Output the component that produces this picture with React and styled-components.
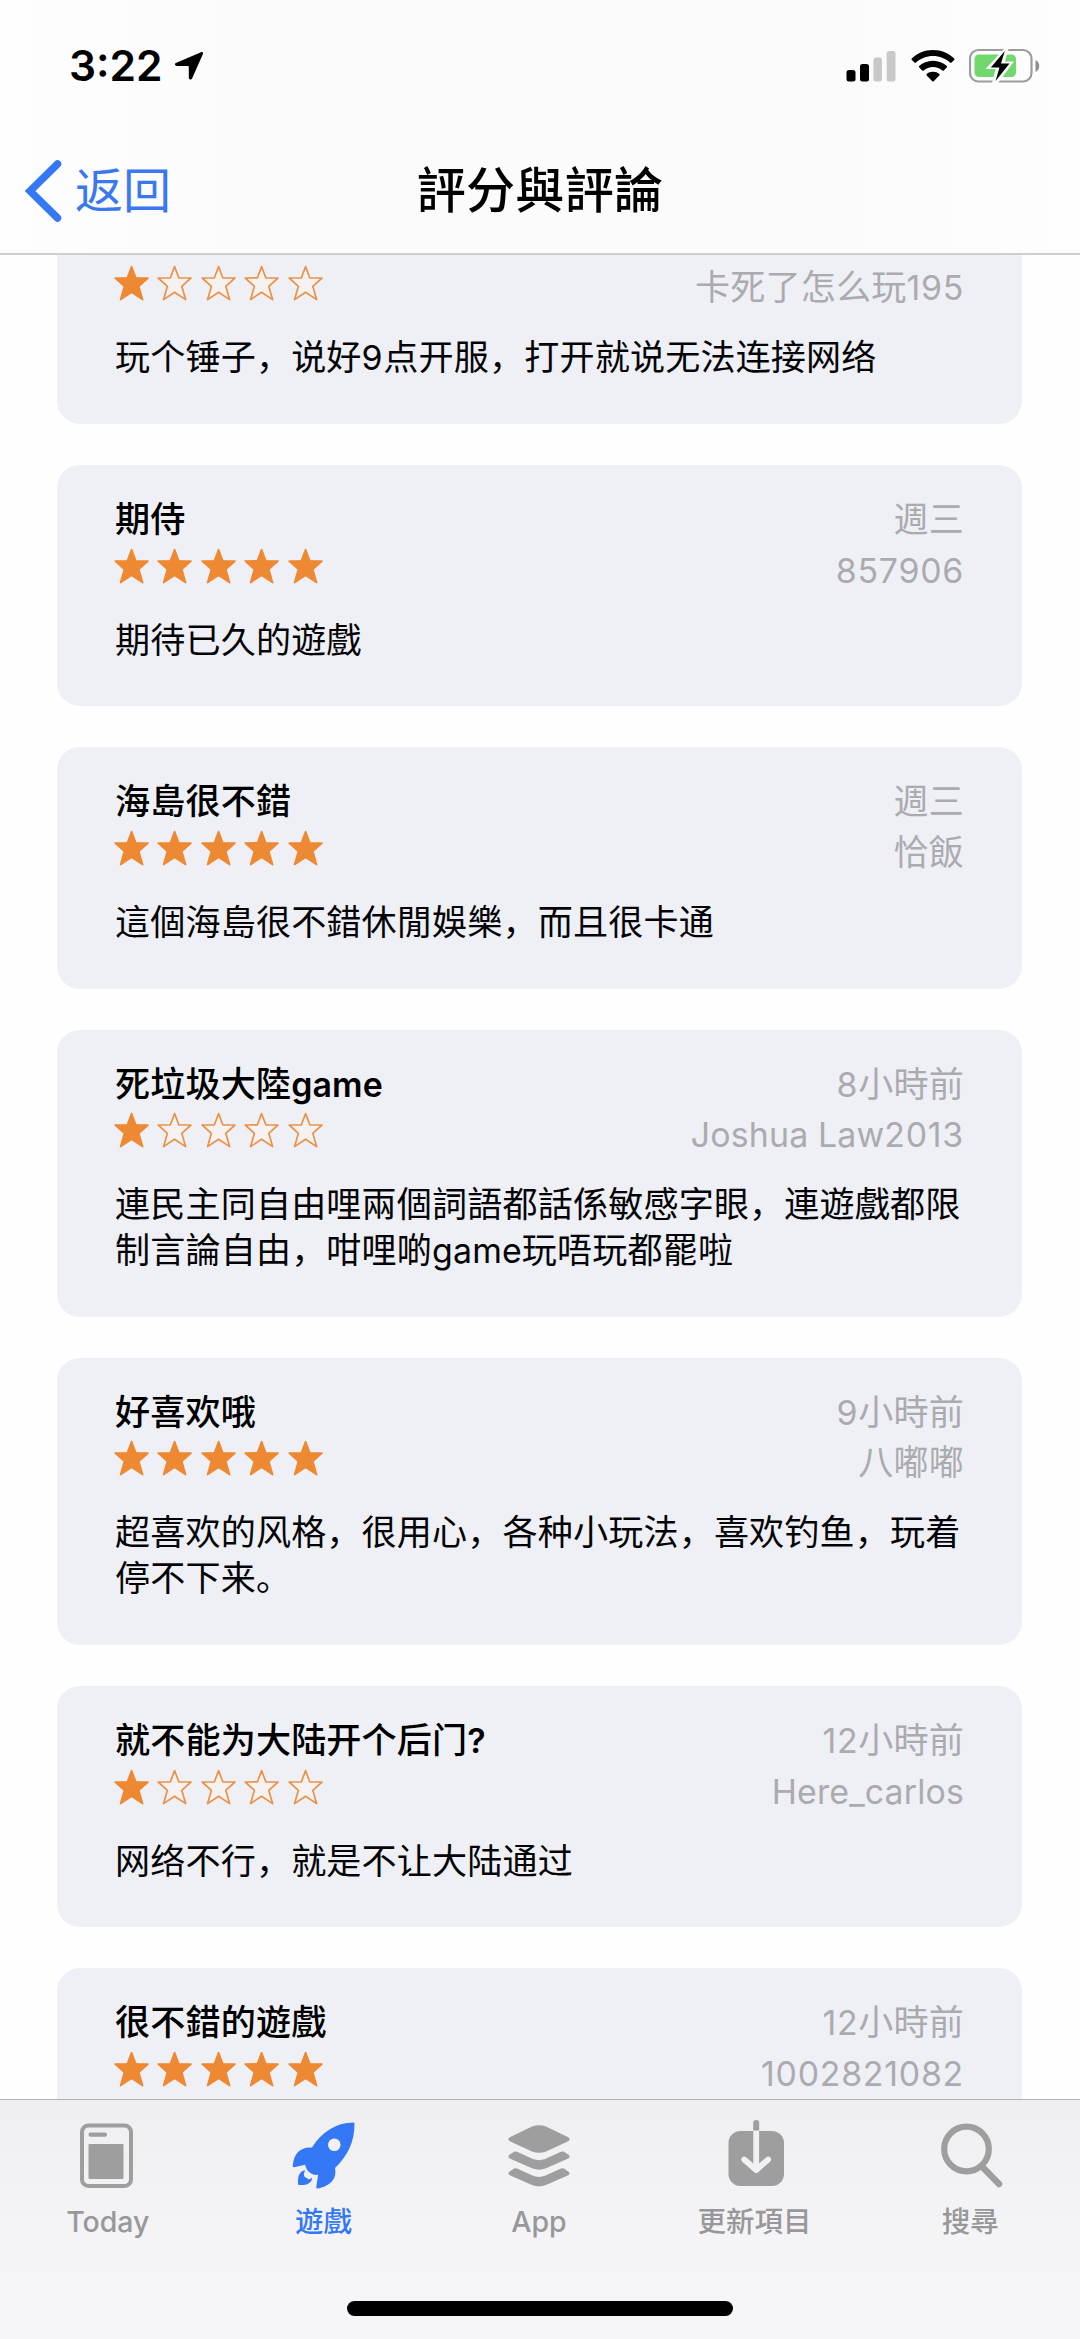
import React from 'react';
import styled, { createGlobalStyle } from 'styled-components';

const GlobalStyle = createGlobalStyle`
    * {
        box-sizing: border-box;
    }

    body {
        margin: 0;
        background: #fefefe;
        font-family: Inter, 'Noto Sans CJK SC', sans-serif;
        color: #050507;
    }
`;

const Screen = styled.div`
    width: 1080px;
    height: 2339px;
    display: flex;
    flex-direction: column;
    overflow: hidden;
`;

const TopBar = styled.header`
    flex: none;
    height: 255px;
    border-bottom: 2px solid #cfcfd2;
    background: linear-gradient(90deg, #fefefe, #fbfbfb 20%, #fbfbfb 80%, #fefefe);
`;

const StatusBar = styled.div`
    height: 132px;
    padding: 0 39px 0 69px;
    display: flex;
    align-items: center;
    justify-content: space-between;
`;

const StatusGroup = styled.div`
    display: flex;
    align-items: center;
    gap: ${(props) => props.$gap || 0}px;
`;

const Time = styled.span`
    font-size: 42.5px;
    font-weight: 600;
    line-height: 44px;
    color: #000;
`;

const NavBar = styled.nav`
    height: 117px;
    padding: 0 25px;
    display: grid;
    grid-template-columns: 1fr auto 1fr;
    align-items: center;
`;

const BackLink = styled.a`
    display: flex;
    align-items: center;
    gap: 12px;
    font-size: 48px;
    line-height: 60px;
    color: #3a78f0;
`;

const PageTitle = styled.h1`
    margin: 0;
    font-size: 49px;
    line-height: 60px;
    font-weight: 500;
    letter-spacing: 0.3px;
    color: #000;
`;

const ReviewList = styled.main`
    flex: 1;
    min-height: 0;
    overflow: hidden;
    padding: 0 58px 0 57px;
    display: flex;
    flex-direction: column;
    gap: 41px;

    /* the list is scrolled part of the way through its first card */
    & > :first-child {
        margin-top: -72.3px;
    }
`;

const Card = styled.article`
    flex: none;
    padding: 31px 58px 43.8px;
    border-radius: 23px;
    background: #eff0f6;
    font-size: 35.1px;
    letter-spacing: 0.15px;
    line-height: 46px;
`;

const CardHead = styled.div`
    height: 96.5px;
    display: flex;
    justify-content: space-between;
`;

const HeadColumn = styled.div`
    display: flex;
    flex-direction: column;
    gap: ${(props) => props.$gap}px;
    align-items: ${(props) => (props.$end ? 'flex-end' : 'flex-start')};
`;

const ReviewTitle = styled.h2`
    margin: 0;
    height: 46px;
    font-size: inherit;
    font-weight: 500;
    color: #000;
`;

const Meta = styled.span`
    height: 46px;
    color: #ababaf;
`;

const StarRow = styled.div`
    display: flex;
    gap: 8.2px;
    margin-left: -1px;
`;

const ReviewText = styled.p`
    margin: 24px -6px 0 0;
`;

const Latin = styled.span`
    font-size: 0.965em;
    line-height: 1;
    letter-spacing: ${(props) => (props.$digits ? 0.75 : 0.15)}px;
    font-weight: ${(props) => (props.$bold ? 600 : 'inherit')};
`;

const TabBar = styled.footer`
    flex: none;
    height: 240px;
    border-top: 1px solid #b1afb6;
    background: linear-gradient(180deg, #efeff1, #f4f4f6 55%, #f6f6f8);
    display: flex;
    flex-direction: column;
    align-items: center;
    justify-content: space-between;
    padding-bottom: 23px;
`;

const Tabs = styled.div`
    width: 100%;
    display: grid;
    grid-template-columns: repeat(5, 1fr);
    padding: 11px 2px 0 0;
`;

const Tab = styled.a`
    display: flex;
    flex-direction: column;
    align-items: center;
    gap: 7px;
    font-size: 28.5px;
    line-height: 40px;
    font-weight: 500;
    color: ${(props) => (props.$active ? '#3478f6' : '#98989a')};

    svg {
        color: ${(props) => (props.$active ? '#3478f6' : '#9e9e9f')};
    }
`;

const HomeIndicator = styled.div`
    width: 386px;
    height: 15px;
    border-radius: 8px;
    background: #000;
`;

// the first and the last card are only partly scrolled into view
const reviews = [
    { stars: 1, author: '卡死了怎么玩195', text: '玩个锤子，说好9点开服，打开就说无法连接网络' },
    { title: '期侍', stars: 5, date: '週三', author: '857906', text: '期待已久的遊戲' },
    { title: '海島很不錯', stars: 5, date: '週三', author: '恰飯', text: '這個海島很不錯休閒娛樂，而且很卡通' },
    { title: '死垃圾大陸game', stars: 1, date: '8小時前', author: 'Joshua Law2013', text: '連民主同自由哩兩個詞語都話係敏感字眼，連遊戲都限制言論自由，咁哩啲game玩唔玩都罷啦' },
    { title: '好喜欢哦', stars: 5, date: '9小時前', author: '八嘟嘟', text: '超喜欢的风格，很用心，各种小玩法，喜欢钓鱼，玩着停不下来。' },
    { title: '就不能为大陆开个后门?', stars: 1, date: '12小時前', author: 'Here_carlos', text: '网络不行，就是不让大陆通过' },
    { title: '很不錯的遊戲', stars: 5, date: '12小時前', author: '1002821082' },
];

// Latin runs are set a little smaller than the Chinese text around them, digits a little wider
const Mixed = ({ children = '', bold }) =>
    children.split(/([0-9]+|[A-Za-z_? ]+)/).filter(Boolean).map((part, i) =>
        /^[A-Za-z0-9_? ]+$/.test(part)
            ? <Latin key={i} $bold={bold} $digits={/[0-9]/.test(part)}>{part}</Latin>
            : part
    );

const Star = ({ filled }) => (
    <svg width="35.2" height="36" viewBox="0 0 35.2 36">
        <path
            d="M17.6 1.6L21.8 12.8L34 13L24.8 21.3L28.6 34.6L17.6 27.2L6.6 34.6L10.4 21.3L1.2 13L13.4 12.8Z"
            fill={filled ? '#ee8933' : '#f6f2f2'}
            stroke={filled ? '#ee8933' : '#e9924a'}
            strokeWidth="1.7"
            strokeLinejoin="round"
        />
    </svg>
);

const LocationIcon = () => (
    <svg width="30" height="30" viewBox="0 0 30 30">
        <path d="M27 1.2C28.6 0.5 29.6 1.6 28.8 3.2L18.2 27.2C17.3 29.2 14.8 28.8 14.8 26.6V16.2C14.8 15.5 14.4 15.1 13.7 15.1L3 14.9C0.6 14.9 0.3 12.6 2.4 11.8Z" fill="#000" />
    </svg>
);

const SignalIcon = () => (
    <svg width="50" height="33" viewBox="0 0 50 33">
        <rect x="0.5" y="20" width="9" height="11.5" rx="2.5" />
        <rect x="14" y="14" width="9" height="17.5" rx="2.5" />
        <rect x="27.5" y="7.5" width="8.5" height="24" rx="2.5" fill="#c8c8c8" />
        <rect x="40.7" y="1" width="8.8" height="30.5" rx="2.5" fill="#c8c8c8" />
    </svg>
);

const WifiIcon = () => (
    <svg width="44" height="33" viewBox="0 0 44 33">
        <path d="M22 0C30.5 0 38 3.4 43.2 8.5Q43.9 9.2 43.2 10L40.5 12.6Q39.8 13.3 39 12.6C34.5 8.4 28.5 6 22 6C15.5 6 9.5 8.4 5 12.6Q4.2 13.3 3.5 12.6L0.8 10Q0.1 9.2 0.8 8.5C6 3.4 13.5 0 22 0Z" />
        <path d="M22 10.8C27.4 10.8 32.2 12.9 35.8 16.1Q36.5 16.9 35.7 17.6L32.8 20.4Q32.1 21 31.3 20.4C28.8 18.2 25.6 16.9 22 16.9C18.4 16.9 15.2 18.2 12.7 20.4Q11.9 21 11.2 20.4L8.3 17.6Q7.5 16.9 8.2 16.1C11.8 12.9 16.6 10.8 22 10.8Z" />
        <path d="M22 21.7C24.5 21.7 26.7 22.6 28.3 24Q29 24.7 28.3 25.4L22.7 31.2Q22 31.9 21.3 31.2L15.7 25.4Q15 24.7 15.7 24C17.3 22.6 19.5 21.7 22 21.7Z" />
    </svg>
);

const BatteryIcon = () => (
    <svg width="72" height="36" viewBox="0 0 72 36">
        <rect x="1" y="2" width="61.5" height="31.5" rx="8.5" fill="none" stroke="#9c9c9e" strokeWidth="2.2" />
        <path d="M66.5 12C71.5 14 71.5 22 66.5 24Z" fill="#8e8e90" />
        <rect x="5.5" y="6.5" width="41.5" height="22.5" rx="4.5" fill="#72d76d" />
        <path d="M35 1L16.5 21H26.5L23 35H29L45 13.5H36L39.5 1Z" fill="#fcfcfc" />
        <path d="M35.8 3L21.8 19.5H30.4L26.6 33L40.5 15.5H32Z" fill="#000" />
    </svg>
);

const BackIcon = () => (
    <svg width="38" height="64" viewBox="0 0 38 64">
        <path d="M32.5 5L5 32L32.5 59" fill="none" stroke="#3478f6" strokeWidth="7.5" strokeLinecap="round" strokeLinejoin="miter" />
    </svg>
);

const TodayIcon = () => (
    <svg width="90" height="84" viewBox="-1 0 90 84">
        <rect x="18" y="14.5" width="49" height="60.5" rx="6.5" fill="none" stroke="currentColor" strokeWidth="4" />
        <rect x="24.5" y="21.5" width="18.5" height="4.3" rx="2.1" fill="currentColor" />
        <rect x="24.5" y="33" width="35" height="35" rx="1" fill="currentColor" />
    </svg>
);

const GamesIcon = () => (
    <svg width="90" height="84" viewBox="-1.5 0 90 84">
        <path
            fill="currentColor"
            fillRule="evenodd"
            d="M74 11.5Q75 11.5 75 12.5C75.2 31 68 45 55.5 57C58 69 49 75.5 38 77.6Q36.6 77.7 36.7 76.2L38.6 63.8C32 64.5 27 60.5 25.6 53.8L14.6 56.3Q13.2 56.4 13.2 55C14 43.5 20 35.5 32.5 36.5C42 21.5 56 11.5 74 11.5ZM54.8 27.4A6.3 6.3 0 1 0 54.8 40A6.3 6.3 0 1 0 54.8 27.4Z"
        />
        <path fill="currentColor" d="M25.8 59.3C19.5 60.2 18 66 18.6 73.2Q18.7 74 19.5 74C27 74.4 32.5 72.3 32.6 66.4C30.3 68.7 28.3 68.8 27.8 67.3C24.3 66.6 23.5 63 25.8 59.3Z" />
    </svg>
);

const AppIcon = () => (
    <svg width="90" height="84" viewBox="0 0 90 84">
        <g transform="translate(6)" fill="currentColor">
            <path d="M9.8 26.2L32 15.6Q39 13 46 15.6L68.2 26.2Q71 28.2 68.2 30.2L46 40.4Q39 43.3 32 40.4L9.8 30.2Q7 28.2 9.8 26.2Z" />
            <path d="M9.8 43.6L14 40.8Q15.8 40 17.6 41L33 48Q39 50.3 45 48L60.4 41Q62.2 40 64 40.8L68.2 43.6Q71 45.6 68.2 47.4L46 57.3Q39 60 32 57.3L9.8 47.4Q7 45.6 9.8 43.6Z" />
            <path d="M9.8 60.4L14 57.6Q15.8 56.8 17.6 57.8L33 64.8Q39 67.1 45 64.8L60.4 57.8Q62.2 56.8 64 57.6L68.2 60.4Q71 62.4 68.2 64.2L46 74.1Q39 76.8 32 74.1L9.8 64.2Q7 62.4 9.8 60.4Z" />
        </g>
    </svg>
);

const UpdateIcon = () => (
    <svg width="90" height="84" viewBox="-1 0 90 84">
        <rect x="17.5" y="20" width="55.5" height="55" rx="12" fill="currentColor" />
        <path d="M45.2 20V57" stroke="#f1f1f3" strokeWidth="5.8" />
        <path d="M33.2 48.5L45.2 59L57.2 48.5" fill="none" stroke="#f1f1f3" strokeWidth="5.8" strokeLinecap="round" strokeLinejoin="round" />
        <path d="M42.2 19.5V11.5Q42.2 9 45.2 9Q48.2 9 48.2 11.5V19.5Z" fill="currentColor" />
    </svg>
);

const SearchIcon = () => (
    <svg width="90" height="84" viewBox="-2 0 90 84">
        <circle cx="39.5" cy="38" r="22.3" fill="none" stroke="currentColor" strokeWidth="6.2" />
        <path d="M55 55.5L72 73" stroke="currentColor" strokeWidth="6.6" strokeLinecap="round" />
    </svg>
);

const tabs = [
    { label: 'Today', icon: TodayIcon },
    { label: '遊戲', icon: GamesIcon, active: true },
    { label: 'App', icon: AppIcon },
    { label: '更新項目', icon: UpdateIcon },
    { label: '搜尋', icon: SearchIcon },
];

const Review = ({ title, stars, date, author, text }) => (
    <Card>
        <CardHead>
            <HeadColumn $gap={5.5}>
                <ReviewTitle><Mixed bold>{title}</Mixed></ReviewTitle>
                <StarRow>
                    {[1, 2, 3, 4, 5].map((n) => <Star key={n} filled={n <= stars} />)}
                </StarRow>
            </HeadColumn>
            <HeadColumn $gap={4.5} $end>
                <Meta><Mixed>{date}</Mixed></Meta>
                <Meta><Mixed>{author}</Mixed></Meta>
            </HeadColumn>
        </CardHead>
        <ReviewText><Mixed>{text}</Mixed></ReviewText>
    </Card>
);

const App = () => {
    return (
        <Screen>
            <GlobalStyle />
            <TopBar>
                <StatusBar>
                    <StatusGroup $gap={11}>
                        <Time>3:22</Time>
                        <LocationIcon />
                    </StatusGroup>
                    <StatusGroup $gap={14.5}>
                        <SignalIcon />
                        <WifiIcon />
                        <BatteryIcon />
                    </StatusGroup>
                </StatusBar>
                <NavBar>
                    <BackLink><BackIcon />返回</BackLink>
                    <PageTitle>評分與評論</PageTitle>
                </NavBar>
            </TopBar>
            <ReviewList>
                {reviews.map((review, i) => <Review key={i} {...review} />)}
            </ReviewList>
            <TabBar>
                <Tabs>
                    {tabs.map(({ label, icon: Icon, active }) => (
                        <Tab key={label} $active={active}>
                            <Icon />
                            {label}
                        </Tab>
                    ))}
                </Tabs>
                <HomeIndicator />
            </TabBar>
        </Screen>
    );
};

export default App;
